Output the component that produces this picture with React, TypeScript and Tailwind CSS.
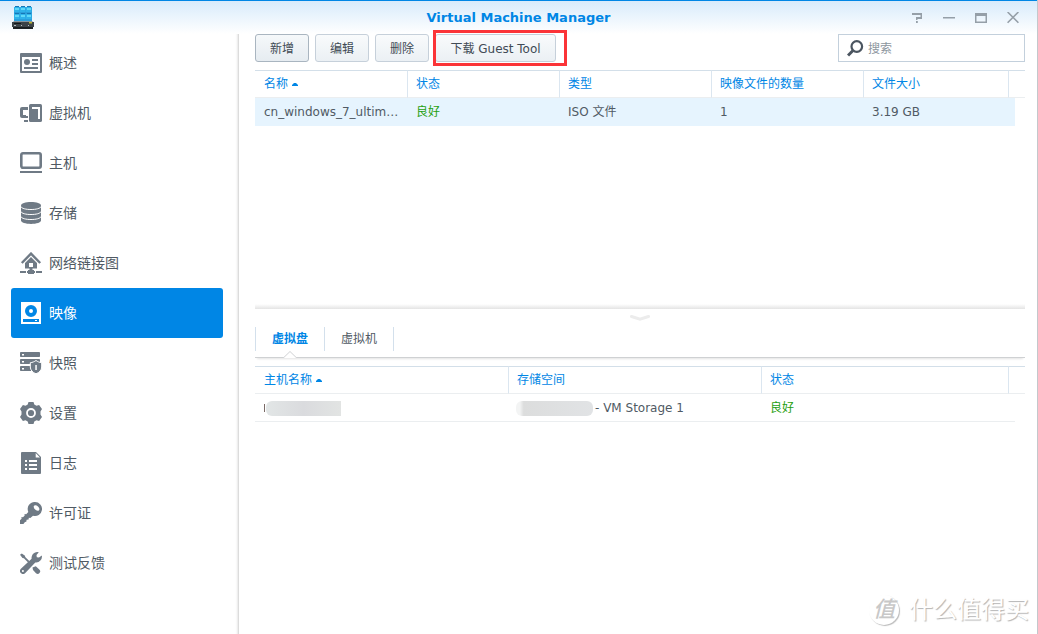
import React, { FC, ReactNode } from "react";

interface IconProps {
  children: ReactNode;
}

const Icon: FC<IconProps> = ({ children }) => (
  <svg viewBox="0 0 22 22" className="w-[22px] h-[22px] shrink-0" fill="currentColor" aria-hidden="true">
    {children}
  </svg>
);

const OverviewIcon = () => (
  <Icon>
    <path fillRule="evenodd" d="M1 1h20a1 1 0 0 1 1 1v18a1 1 0 0 1-1 1H1a1 1 0 0 1-1-1V2a1 1 0 0 1 1-1zM2 5v14h18V5z" />
    <circle cx="7" cy="10" r="3" />
    <path d="M12 7h6v2h-6zM12 11h6v2h-6zM4 15h14v2H4z" />
  </Icon>
);

const MachineIcon = () => (
  <Icon>
    <path d="M8 5H2a2 2 0 0 0-2 2v7a2 2 0 0 0 2 2h6v-2H6v-1H3V8h5z" />
    <path d="M4 18h4v2H4z" />
    <rect x="9" y="2" width="13" height="18" rx="1.6" />
    <path d="M12 5h8v12h-2V7h-6z" fill="#fff" />
  </Icon>
);

const HostIcon = () => (
  <Icon>
    <rect x="1.3" y="1.3" width="19.4" height="14.4" rx="1.6" fill="none" stroke="currentColor" strokeWidth="2.6" />
    <path d="M0 19h22v2H0z" />
  </Icon>
);

const StorageIcon = () => (
  <Icon>
    <path d="M1 3.4C1 1.5 5.5 0 11 0s10 1.5 10 3.4v15.2C21 20.5 16.5 22 11 22S1 20.500 1 18.600z" />
    <path
      d="M.8 4.500c1 2 5 3 10.200 3s9.200-1 10.200-3M.8 9.500c1 2 5 3 10.200 3s9.200-1 10.200-3M.8 14.500c1 2 5 3 10.200 3s9.200-1 10.200-3"
      fill="none"
      stroke="#fff"
      strokeWidth="1"
    />
  </Icon>
);

const NetworkIcon = () => (
  <Icon>
    <path d="M1.800 11 11 1.600 20.200 11" fill="none" stroke="currentColor" strokeWidth="2.400" />
    <path fillRule="evenodd" d="M11 5 17 11v5.500H5V11zM9 11v4h4v-4z" />
    <path d="M9.500 16h3v2H14v1h8v2h-8v1H8v-1H0v-2h8v-1h1.500z" />
    <path d="M6 19h1v2H6zM15 19h1v2h-1z" fill="#fff" />
  </Icon>
);

const ImageIcon = () => (
  <Icon>
    <path d="M1 0h20v22H1z" />
    <circle cx="11" cy="9" r="4" fill="none" stroke="#0086e5" strokeWidth="4" />
    <path d="M3 17h16v3H3z" fill="#0086e5" />
    <path d="M15 18h2v1h-2z" />
  </Icon>
);

const SnapshotIcon = () => (
  <Icon>
    <rect x="0" y="0" width="20" height="5" rx=".8" />
    <rect x="0" y="7" width="20" height="5" rx=".8" />
    <rect x="0" y="14" width="13" height="5" rx=".8" />
    <path d="M2 2h2v1.600H2zM2 9h2v1.600H2zM2 16h2v1.600H2z" fill="#fff" />
    <path
      d="M16 8.500c1.600 1.200 3.600 2 5.700 2.200V15c0 3-2.400 5.600-5.700 6.800-3.300-1.200-5.700-3.800-5.700-6.800v-4.300c2.100-.2 4.100-1 5.700-2.200z"
      stroke="#fff"
      strokeWidth="1"
    />
    <path d="M15.300 13h1.500v5h-1.500z" fill="#fff" />
  </Icon>
);

const SettingsIcon = () => (
  <Icon>
    <path d="M8.500 0h5l.8 2.500 2.200 1.200 2.600-.6L22 7l-1.500 2.400v3.200L22 15l-2.900 3.900-2.600-.6-2.200 1.200-.8 2.500h-5l-.8-2.500-2.200-1.200-2.600.6L0 15l1.500-2.400V9.400L0 7l2.900-3.900 2.600.6 2.200-1.200z" />
    <circle cx="11" cy="11" r="4" fill="none" stroke="#fff" strokeWidth="1.800" />
  </Icon>
);

const LogIcon = () => (
  <Icon>
    <path d="M2 0h14l5 5v16a1 1 0 0 1-1 1H2a1 1 0 0 1-1-1V1a1 1 0 0 1 1-1z" />
    <path d="M15.700 1v4.500H20zM5 8h2v2H5zM9 8h8v2H9zM5 12h2v2H5zM9 12h8v2H9zM5 16h2v2H5zM9 16h8v2H9z" fill="#fff" />
  </Icon>
);

const KeyIcon = () => (
  <Icon>
    <path
      fillRule="evenodd"
      d="M15 0a7 7 0 1 1-2 13.700L10.300 16l-1.500-.3-.2 1.900-2 .2-.3 2-1.300.2L3.400 22H0v-3.800l1.600-1.500-.2-1.700 1.600.2 1.700-1.700-.2-1.400 1.700.1 2.100-2.300A7 7 0 0 1 15 0zm-1 3.800c-.8 1 .2 2.900 1.500 4s2.700 1.400 3.500.5.300-2.700-1-3.900-3.200-1.600-4-.6z"
    />
  </Icon>
);

const ToolsIcon = () => (
  <Icon>
    <path d="M0 2.800 1.800 1.400 5 3.700 5.200 5l4.300 4.200-1.400 1.400L3.900 6.300l-1.400-.2z" />
    <path d="M12.500 15.500 15.800 14.200 19.300 17.500a2.300 2.300 0 0 1-3.300 3.700L13 18z" />
    <path
      fillRule="evenodd"
      d="M18.800.3 16.500 3l.3 2.200 2.200.3L21.800 3.400A5.800 5.800 0 0 1 15.300 10.400L5.300 21.100a3.100 3.100 0 0 1-4.400-4.400L11.600 6.700A5.800 5.800 0 0 1 18.800.3zM2.900 17.900a1 1 0 1 0 .01 2 1 1 0 0 0 0-2z"
    />
  </Icon>
);

const menus = [
  { label: "概述", icon: <OverviewIcon /> },
  { label: "虚拟机", icon: <MachineIcon /> },
  { label: "主机", icon: <HostIcon /> },
  { label: "存储", icon: <StorageIcon /> },
  { label: "网络链接图", icon: <NetworkIcon /> },
  { label: "映像", icon: <ImageIcon />, active: true },
  { label: "快照", icon: <SnapshotIcon /> },
  { label: "设置", icon: <SettingsIcon /> },
  { label: "日志", icon: <LogIcon /> },
  { label: "许可证", icon: <KeyIcon /> },
  { label: "测试反馈", icon: <ToolsIcon /> },
];

const AppLogo = () => (
  <svg viewBox="0 0 22 23" className="w-[22px] h-[23px]" aria-hidden="true">
    <path d="M2 1h18v15H2z" fill="#2a9fdc" />
    {[2, 8, 14].map((x) =>
      [0, 7].map((y) => (
        <g key={`${x}-${y}`}>
          <path d={`M${x + 1} ${y}h4v1h-4z`} fill="#1677b5" />
          <path d={`M${x} ${y + 1}h5.500v5H${x}z`} fill="#2fb2ea" />
          <path d={`M${x + 1} ${y + 2}h4v2h-4z`} fill="#5fd8f8" />
        </g>
      ))
    )}
    <path d="M2 15h18l2 2H0z" fill="#8b949b" />
    <path d="M0 16h22v5H0z" fill="#3b4247" />
    <path d="M1 21h20v2H1z" fill="#1e2326" />
    <path d="M2 17h7v1H2zM3 21h16v.6H3z" fill="#14181a" />
    <path d="M2 19h2v1H2zM9 19h1v1H9zM16 19h1v1h-1z" fill="#b8bec2" />
    <path d="M17 16h3v1.500h-3z" fill="#b7b338" />
  </svg>
);

const Header = () => (
  <header className="h-[34px] shrink-0 border-t border-[#0086e5] bg-linear-to-b from-[#d8ebfb] to-white grid grid-cols-[1fr_auto_1fr] items-center px-3">
    <AppLogo />
    <h1 className="text-[13px] font-bold text-[#0086e5]">Virtual Machine Manager</h1>
    <div className="flex justify-end gap-5 pr-1.5 text-[#959fa8]">
      <button type="button" aria-label="帮助">
        <svg viewBox="0 0 12 12" className="w-3 h-3" fill="currentColor">
          <path d="M1 1h10v6H6.500v1H5V5h4.500V3H1zM5 9h1.800v2H5z" />
        </svg>
      </button>
      <button type="button" aria-label="最小化">
        <svg viewBox="0 0 12 12" className="w-3 h-3" fill="currentColor">
          <path d="M0 5h12v1.500H0z" />
        </svg>
      </button>
      <button type="button" aria-label="最大化">
        <svg viewBox="0 0 12 12" className="w-3 h-3" fill="currentColor">
          <path fillRule="evenodd" d="M0 1h12v10H0zM1.500 4v5.500h9V4z" />
        </svg>
      </button>
      <button type="button" aria-label="关闭">
        <svg viewBox="0 0 12 12" className="w-3 h-3" fill="none" stroke="currentColor" strokeWidth="1.600">
          <path d="M.6 0l10.800 10.800M11.400 0 .6 10.800" />
        </svg>
      </button>
    </div>
  </header>
);

const Sidebar = () => (
  <nav className="w-[239px] shrink-0 pt-1 pl-[11px] pr-[15px] border-r border-[#dcdcdc] shadow-[inset_-3px_0_2px_-2px_#e8e8e8]">
    {menus.map((item) => (
      <a
        key={item.label}
        href="#"
        className={
          item.active
            ? "flex items-center gap-[7px] h-[50px] pl-[9px] rounded-[3px] text-sm bg-[#0086e5] text-white"
            : "flex items-center gap-[7px] h-[50px] pl-[9px] rounded-[3px] text-sm text-[#6f7a85]"
        }
      >
        {item.icon}
        <span className={item.active ? "text-white" : "text-[#505a64]"}>{item.label}</span>
      </a>
    ))}
  </nav>
);

const buttonClass =
  "h-7 pt-0.5 rounded-[3px] border border-[#c6d0da] bg-linear-to-b from-[#f9fbfc] to-[#ebf0f4] text-[#414b55]";

const Toolbar = () => (
  <div className="flex justify-between">
    <div className="flex gap-1.5">
      <button type="button" className="w-[54px] h-7 pt-0.5 rounded-[3px] border border-[#a9b5c0] bg-linear-to-b from-[#f5f8fa] to-[#e6ecf1] text-[#414b55]">
        新增
      </button>
      <button type="button" className={`${buttonClass} w-[54px]`}>编辑</button>
      <button type="button" className={`${buttonClass} w-[54px]`}>删除</button>
      <div className="relative">
        <button type="button" className={`${buttonClass} w-[121px] whitespace-nowrap`}>下载 Guest Tool</button>
        <div className="absolute -top-1 -bottom-1 -left-0.5 -right-[11px] border-3 border-[#fb3438] pointer-events-none" />
      </div>
    </div>
    <label className="flex items-center w-[187px] h-7 border border-[#c3d0dc] pl-2 gap-1">
      <svg viewBox="0 0 17 17" className="w-[17px] h-[17px] shrink-0" fill="none" stroke="#4b5560" aria-hidden="true">
        <circle cx="9.800" cy="6.500" r="5.300" strokeWidth="2.200" />
        <path d="M6 10.500 1 15.500" strokeWidth="3" />
      </svg>
      <input type="text" aria-label="搜索" placeholder="搜索" className="w-full min-w-0 pt-0.5 outline-none placeholder:text-[#8d969e]" />
    </label>
  </div>
);

interface HeadCellProps {
  children: ReactNode;
  sorted?: boolean;
}

const HeadCell: FC<HeadCellProps> = ({ children, sorted }) => (
  <th className="h-7 pl-2 first:pl-[9px] border-t border-r border-b border-t-[#d3dfe9] border-r-[#dbe6f0] border-b-[#ebeef0] text-left font-normal text-[#0086e5]">
    <span className="inline-flex items-center gap-1">
      {children}
      {sorted && (
        <svg viewBox="0 0 6 3" className="w-1.5 h-[3px]" fill="currentColor" aria-hidden="true">
          <path d="M2 0h2l2 2v1H0V2z" />
        </svg>
      )}
    </span>
  </th>
);

const EndHeadCell = () => (
  <td colSpan={2} className="border-t border-b border-t-[#d3dfe9] border-b-[#ebeef0]" />
);

const ImageTable = () => (
  <table className="w-full table-fixed border-separate border-spacing-0 mt-2">
    <colgroup>
      <col className="w-[153px]" />
      <col className="w-[152px]" />
      <col className="w-[152px]" />
      <col className="w-[152px]" />
      <col />
      <col className="w-1.5" />
      <col className="w-2.5" />
    </colgroup>
    <thead>
      <tr>
        <HeadCell sorted>名称</HeadCell>
        <HeadCell>状态</HeadCell>
        <HeadCell>类型</HeadCell>
        <HeadCell>映像文件的数量</HeadCell>
        <HeadCell>文件大小</HeadCell>
        <EndHeadCell />
      </tr>
    </thead>
    <tbody className="text-[#505a64]">
      <tr>
        <td className="h-7 pl-[9px] bg-[#e6f4fe] whitespace-nowrap">cn_windows_7_ultim…</td>
        <td className="h-7 px-2 bg-[#e6f4fe] text-[#1fa010]">良好</td>
        <td className="h-7 px-2 bg-[#e6f4fe]">ISO 文件</td>
        <td className="h-7 px-2 bg-[#e6f4fe]">1</td>
        <td className="h-7 px-2 bg-[#e6f4fe]">3.19 GB</td>
        <td className="bg-[#e6f4fe]" />
        <td />
      </tr>
    </tbody>
  </table>
);

const Tabs = () => (
  <div className="flex pb-1.5 border-b border-[#cfd1d3] shadow-[0_3px_2px_-2px_#e4e4e4]" role="tablist">
    <button type="button" role="tab" aria-selected="true" className="relative w-[69px] h-6 border-l border-[#d3e0ec] font-bold text-[#0086e5]">
      虚拟盘
      <svg viewBox="0 0 14 7" className="absolute left-[27px] top-6 w-3.5 h-[7px]" aria-hidden="true">
        <path d="M0 7 7 0l7 7z" fill="#fff" />
        <path d="M0 6.500h.8L7 .5l6.200 6H14" fill="none" stroke="#cfd1d3" />
      </svg>
    </button>
    <button type="button" role="tab" aria-selected="false" className="w-[70px] h-6 border-x border-[#d3e0ec] text-[#505a64]">
      虚拟机
    </button>
  </div>
);

const HostTable = () => (
  <table className="w-full table-fixed border-separate border-spacing-0 mt-2">
    <colgroup>
      <col className="w-[254px]" />
      <col className="w-[253px]" />
      <col />
      <col className="w-1.5" />
      <col className="w-2.5" />
    </colgroup>
    <thead>
      <tr>
        <HeadCell sorted>主机名称</HeadCell>
        <HeadCell>存储空间</HeadCell>
        <HeadCell>状态</HeadCell>
        <EndHeadCell />
      </tr>
    </thead>
    <tbody className="text-[#505a64]">
      <tr>
        <td className="h-7 pl-[9px] pt-px border-b border-[#ebeef0]">
          <div className="flex items-center gap-px">
            <div className="w-px h-2 bg-[#7a6a66]" />
            <div className="w-[75px] h-[15px] rounded-l-md bg-linear-to-r from-[#e2e6e6] via-[#dadbde] to-[#e2e4e3]" />
          </div>
        </td>
        <td className="h-7 pl-[7px] pt-px border-b border-[#ebeef0]">
          <div className="flex items-center gap-0.5">
            <div className="w-[77px] h-[15px] rounded-md bg-linear-to-r from-[#f3f4f4] from-5% via-[#dcdddd] via-10% to-[#e1e3e5]" />
            <span>- VM Storage 1</span>
          </div>
        </td>
        <td className="h-7 px-2 border-b border-[#ebeef0] text-[#1fa010]">良好</td>
        <td className="border-b border-[#ebeef0]" />
        <td />
      </tr>
    </tbody>
  </table>
);

const Watermark = () => (
  <div className="absolute right-2 bottom-2 flex items-center gap-2.5 text-white [text-shadow:1px_1px_1px_#b4b4b4] pointer-events-none">
    <div className="w-[30px] h-[30px] rounded-full flex items-center justify-center text-[22px] italic font-medium text-[#c8c8c8] [text-shadow:none] shadow-[1px_1px_1px_#bbbbbb]">
      值
    </div>
    <span className="text-2xl">什么值得买</span>
  </div>
);

const App: FC = () => {
  return (
    <div className="relative min-h-screen flex flex-col bg-white border-r border-[#c4c8cc] font-['DejaVu_Sans','Noto_Sans_CJK_SC',sans-serif] text-xs">
      <Header />
      <div className="flex flex-1">
        <Sidebar />
        <main className="flex-1 min-w-0 flex flex-col pl-4 pr-3">
          <section className="flex-[11] flex flex-col justify-between">
            <div>
              <Toolbar />
              <ImageTable />
            </div>
            <div className="h-[5px] bg-linear-to-b from-white to-[#e4e4e4]" />
          </section>
          <section className="flex-[13]">
            <button type="button" aria-label="收起" className="block mx-auto h-[18px]">
              <svg viewBox="0 0 20 6" className="w-5 h-1.5" fill="none" stroke="#ececec" strokeWidth="3" strokeLinecap="round">
                <path d="M1.500 1.500 10 4.200l8.500-2.700" />
              </svg>
            </button>
            <Tabs />
            <HostTable />
          </section>
        </main>
      </div>
      <Watermark />
    </div>
  );
};

export default App;
